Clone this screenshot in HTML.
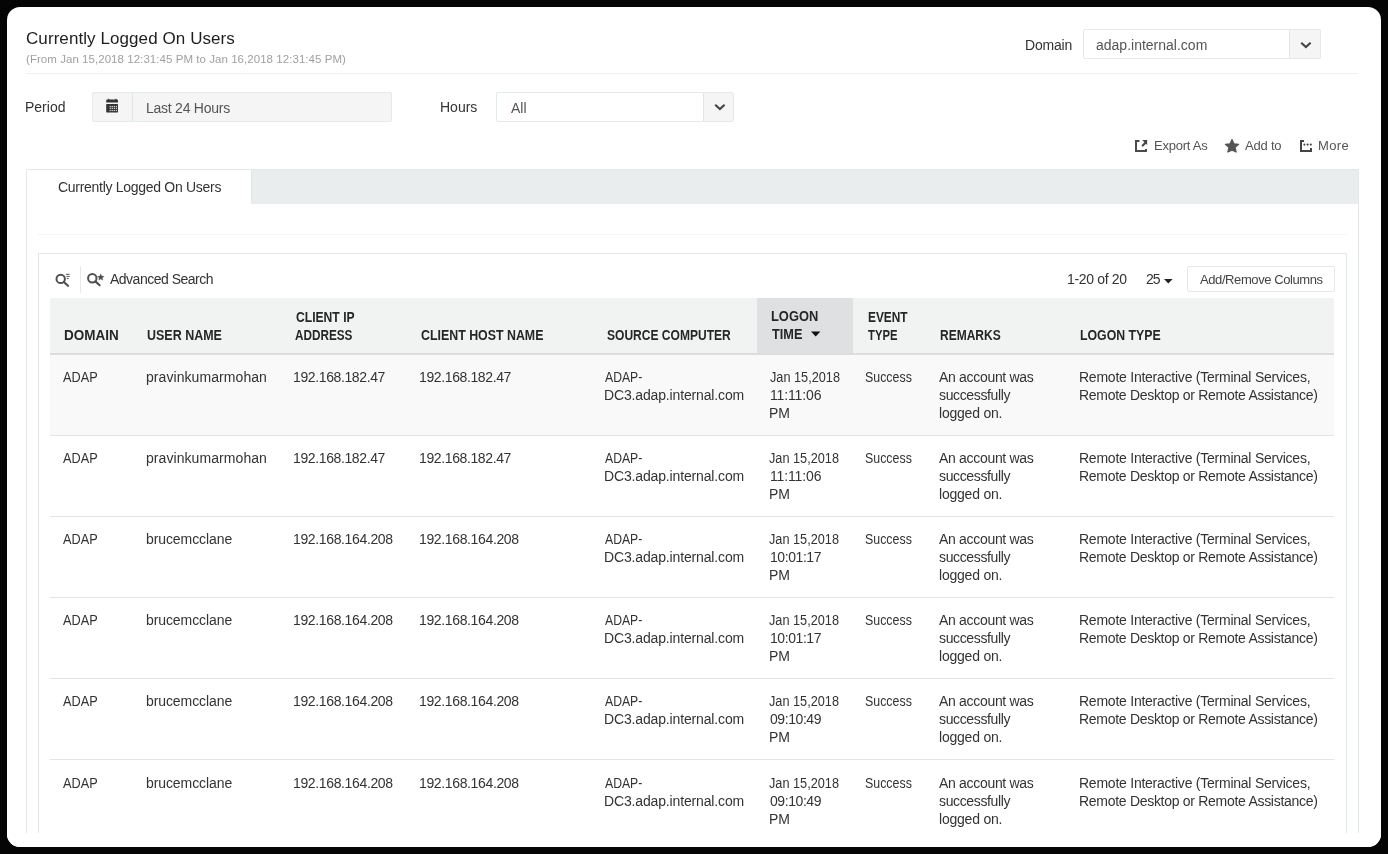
<!DOCTYPE html>
<html><head><meta charset="utf-8">
<style>
*{box-sizing:border-box;margin:0;padding:0}
html,body{width:1388px;height:854px;overflow:hidden;background:#050505}
body{font-family:"Liberation Sans",sans-serif;color:#333;position:relative}
.frame{position:absolute;left:7px;top:7px;width:1374px;height:840px;background:#fff;border-radius:13px}
.a{position:absolute;white-space:nowrap;transform-origin:0 0}
.hr{position:absolute;height:1px;background:#f0f0f0}
.box{position:absolute;border:1px solid #e4e9e9;border-radius:2px}
.tabbar{position:absolute;left:251px;top:169px;width:1108px;height:36px;background:#e9eded;border:1px solid #e2e7e7;border-bottom-left-radius:3px}
.tab{position:absolute;left:26px;top:169px;width:225px;height:36px;background:#fff;border:1px solid #e3e7e7;border-bottom:none;border-right:none}
.panel{position:absolute;left:26px;top:204px;width:1333px;height:629px;border-left:1px solid #e3e7e7;border-right:1px solid #e3e7e7;background:#fff}
.inner{position:absolute;left:38px;top:253px;width:1309px;height:580px;border:1px solid #e3e7e7;border-bottom:none;background:#fff}
.thead{position:absolute;left:50px;top:298px;width:1284px;height:57px;background:#f1f2f2;border-bottom:2px solid #dcdede}
.sorted{position:absolute;left:757px;top:298px;width:96px;height:55px;background:#dee0e1}
.row{position:absolute;left:50px;width:1284px;height:81px;border-bottom:1px solid #e4e4e4}
</style></head><body>
<div class="frame"></div>
<div class="hr" style="left:26px;top:73px;width:1332px"></div>

<div class="box" style="left:1083px;top:29px;width:238px;height:30px;background:#fff"></div>
<div class="a" style="left:1289px;top:30px;width:31px;height:28px;background:#f5f5f5;border-left:1px solid #e1e6e6"></div>
<svg class="a" style="left:1299px;top:40px" width="14" height="9" viewBox="0 0 14 9"><path d="M2.2 2.8 L6.9 7.1 L11.6 2.8" fill="none" stroke="#444" stroke-width="2.1"/></svg>

<div class="box" style="left:92px;top:92px;width:300px;height:30px;background:#f5f5f5"></div>
<div class="a" style="left:132px;top:93px;width:1px;height:28px;background:#e1e6e6"></div>
<svg class="a" style="left:106px;top:98px" width="13" height="15" viewBox="0 0 13 15">
 <path d="M0.2 4.5 L0.2 2.6 Q0.2 1.4 1.4 1.4 L2 1.4 L2.6 0.6 L3.6 1.4 L9 1.4 L10 0.6 L10.6 1.4 L11 1.4 Q12 1.4 12 2.6 L12 4.5 Z" fill="#333"/>
 <rect x="0.2" y="6" width="11.8" height="8.4" rx="0.6" fill="#333"/>
 <g fill="#d0d0d0"><rect x="3.6" y="7.9" width="1.3" height="1.2"/><rect x="5.6" y="7.9" width="1.3" height="1.2"/><rect x="7.7" y="7.9" width="1.3" height="1.2"/><rect x="9.8" y="7.9" width="1.3" height="1.2"/><rect x="3.6" y="9.7" width="1.3" height="1.2"/><rect x="5.6" y="9.7" width="1.3" height="1.2"/><rect x="7.7" y="9.7" width="1.3" height="1.2"/><rect x="9.8" y="9.7" width="1.3" height="1.2"/><rect x="3.6" y="11.9" width="1.3" height="1.2"/><rect x="5.6" y="11.9" width="1.3" height="1.2"/><rect x="7.7" y="11.9" width="1.3" height="1.2"/><rect x="9.8" y="11.9" width="1.3" height="1.2"/></g>
</svg>

<div class="box" style="left:496px;top:92px;width:238px;height:30px;background:#fff"></div>
<div class="a" style="left:703px;top:93px;width:30px;height:28px;background:#f5f5f5;border-left:1px solid #e1e6e6"></div>
<svg class="a" style="left:713px;top:102px" width="14" height="9" viewBox="0 0 14 9"><path d="M2.2 2.8 L6.9 7.1 L11.6 2.8" fill="none" stroke="#444" stroke-width="2.1"/></svg>

<svg class="a" style="left:1134px;top:139px" width="15" height="15" viewBox="0 0 15 15">
 <path d="M5.5 2 L2 2 L2 12 L12 12 L12 10" fill="none" stroke="#4a4a4a" stroke-width="2"/>
 <path d="M8.7 6.6 L11.8 3.5" fill="none" stroke="#444" stroke-width="2.1" stroke-linecap="round"/>
 <path d="M8.2 1.1 L13.1 1.1 L13.1 6 Z" fill="#444"/>
</svg>
<svg class="a" style="left:1224px;top:138px" width="16" height="16" viewBox="0 0 16 16"><path d="M8 1.4 L10 5.8 L14.7 6.3 L11.1 9.4 L12.2 14.1 L8 12.2 L3.8 14.1 L4.9 9.4 L1.3 6.3 L6 5.8 Z" fill="#555" stroke="#555" stroke-width="1.1" stroke-linejoin="round"/></svg>
<svg class="a" style="left:1299px;top:139px" width="15" height="15" viewBox="0 0 15 15">
 <path d="M5 2 L2 2 L2 12 L12 12 L12 9" fill="none" stroke="#444" stroke-width="2"/>
 <circle cx="5.4" cy="5.6" r="1.05" fill="#444"/><circle cx="8.6" cy="5.6" r="1.05" fill="#444"/><circle cx="11.8" cy="5.6" r="1.05" fill="#444"/>
</svg>

<div class="tabbar"></div>
<div class="panel"></div>
<div class="tab"></div>
<div class="hr" style="left:38px;top:234px;width:1309px;background:#f4f6f6"></div>
<div class="inner"></div>

<svg class="a" style="left:53px;top:272px" width="20" height="17" viewBox="0 0 20 17">
 <circle cx="7.7" cy="6.9" r="4.2" fill="none" stroke="#505050" stroke-width="2"/>
 <path d="M10.8 10 L15 13.8" stroke="#505050" stroke-width="2.2" stroke-linecap="round"/>
 <path d="M12.8 2.3 L16.6 2.3 M13.4 4.4 L16.6 4.4 M13.8 6.5 L15.6 6.5" stroke="#555" stroke-width="1"/>
</svg>
<div class="a" style="left:80px;top:266px;width:1px;height:27px;background:#e6eaea"></div>
<svg class="a" style="left:85px;top:271px" width="20" height="17" viewBox="0 0 20 17">
 <circle cx="7.3" cy="7.3" r="4.2" fill="none" stroke="#505050" stroke-width="2"/>
 <path d="M10.4 10.4 L14.6 14.2" stroke="#505050" stroke-width="2.2" stroke-linecap="round"/>
 <path d="M15.8 2.8 L16.8 5.1 L19.2 5.3 L17.4 6.9 L18 9.3 L15.8 8 L13.6 9.3 L14.2 6.9 L12.4 5.3 L14.8 5.1 Z" fill="#505050" stroke="#505050" stroke-width="0.2" stroke-linejoin="round"/>
</svg>

<svg class="a" style="left:1164px;top:279px" width="9" height="5" viewBox="0 0 9 5"><path d="M0 0 L8.6 0 L4.3 4.5 Z" fill="#222"/></svg>
<div class="box" style="left:1187px;top:266px;width:148px;height:26px;background:#fff;border-color:#e3e8e8"></div>

<div class="thead"></div>
<div class="sorted"></div>
<svg class="a" style="left:811px;top:331px" width="10" height="6" viewBox="0 0 10 6"><path d="M0 0.5 L9.4 0.5 L4.7 5.6 Z" fill="#111"/></svg>

<div class="row" style="top:355px;background:#f9f9f9"></div>
<div class="row" style="top:436.12px"></div>
<div class="row" style="top:517.24px"></div>
<div class="row" style="top:598.36px"></div>
<div class="row" style="top:679.48px"></div>
<div class="row" style="top:760.60px"></div>

<div style="position:absolute;left:0;top:0;width:1388px;height:854px;will-change:transform">
<div class="a" style="left:26.00px;top:28px;font-size:17px;line-height:22px;color:#1e1e1e;letter-spacing:0.08px;">Currently Logged On Users</div>
<div class="a" style="left:26.00px;top:51px;font-size:11.5px;line-height:16px;color:#a0a0a0;letter-spacing:0.05px;">(From Jan 15,2018 12:31:45 PM to Jan 16,2018 12:31:45 PM)</div>
<div class="a" style="left:1025.00px;top:36px;font-size:14px;line-height:18px;color:#333;letter-spacing:-0.20px;">Domain</div>
<div class="a" style="left:1096.00px;top:36px;font-size:14px;line-height:18px;color:#555;">adap.internal.com</div>
<div class="a" style="left:25.00px;top:98px;font-size:14px;line-height:18px;color:#333;">Period</div>
<div class="a" style="left:146.00px;top:99px;font-size:14px;line-height:18px;color:#555;letter-spacing:-0.25px;">Last 24 Hours</div>
<div class="a" style="left:440.00px;top:98px;font-size:14px;line-height:18px;color:#333;">Hours</div>
<div class="a" style="left:511.00px;top:99px;font-size:14px;line-height:18px;color:#555;">All</div>
<div class="a" style="left:1154.00px;top:137px;font-size:13px;line-height:18px;color:#555;letter-spacing:-0.25px;">Export As</div>
<div class="a" style="left:1245.00px;top:137px;font-size:13px;line-height:18px;color:#555;letter-spacing:-0.20px;">Add to</div>
<div class="a" style="left:1318.00px;top:137px;font-size:13px;line-height:18px;color:#555;letter-spacing:0.33px;">More</div>
<div class="a" style="left:58.00px;top:178px;font-size:14px;line-height:18px;color:#333;letter-spacing:-0.29px;">Currently Logged On Users</div>
<div class="a" style="left:110.00px;top:270px;font-size:14px;line-height:18px;color:#333;letter-spacing:-0.50px;">Advanced Search</div>
<div class="a" style="left:1067.00px;top:270px;font-size:14px;line-height:18px;color:#333;letter-spacing:-0.33px;">1-20 of 20</div>
<div class="a" style="left:1146.00px;top:270px;font-size:14px;line-height:18px;color:#333;letter-spacing:-1.00px;">25</div>
<div class="a" style="left:1200.00px;top:272px;font-size:13px;line-height:16px;color:#444;letter-spacing:-0.41px;">Add/Remove Columns</div>
<div class="a" style="left:64.00px;top:326px;font-size:14px;line-height:18px;color:#262626;font-weight:700;transform:scaleX(0.964);">DOMAIN</div>
<div class="a" style="left:147.00px;top:326px;font-size:14px;line-height:18px;color:#262626;font-weight:700;transform:scaleX(0.892);">USER NAME</div>
<div class="a" style="left:296.00px;top:308px;font-size:14px;line-height:18px;color:#262626;font-weight:700;transform:scaleX(0.866);">CLIENT IP</div>
<div class="a" style="left:295.00px;top:326px;font-size:14px;line-height:18px;color:#262626;font-weight:700;transform:scaleX(0.839);">ADDRESS</div>
<div class="a" style="left:421.00px;top:326px;font-size:14px;line-height:18px;color:#262626;font-weight:700;transform:scaleX(0.884);">CLIENT HOST NAME</div>
<div class="a" style="left:607.00px;top:326px;font-size:14px;line-height:18px;color:#262626;font-weight:700;transform:scaleX(0.860);">SOURCE COMPUTER</div>
<div class="a" style="left:771.00px;top:307px;font-size:14px;line-height:18px;color:#262626;font-weight:700;transform:scaleX(0.920);">LOGON</div>
<div class="a" style="left:772.00px;top:325px;font-size:14px;line-height:18px;color:#262626;font-weight:700;transform:scaleX(0.909);">TIME</div>
<div class="a" style="left:868.00px;top:308px;font-size:14px;line-height:18px;color:#262626;font-weight:700;transform:scaleX(0.849);">EVENT</div>
<div class="a" style="left:868.00px;top:326px;font-size:14px;line-height:18px;color:#262626;font-weight:700;transform:scaleX(0.806);">TYPE</div>
<div class="a" style="left:940.00px;top:326px;font-size:14px;line-height:18px;color:#262626;font-weight:700;transform:scaleX(0.857);">REMARKS</div>
<div class="a" style="left:1080.00px;top:326px;font-size:14px;line-height:18px;color:#262626;font-weight:700;transform:scaleX(0.879);">LOGON TYPE</div>
<div class="a" style="left:63.00px;top:368.0px;font-size:14px;line-height:18px;color:#333;transform:scaleX(0.908);">ADAP</div>
<div class="a" style="left:146.00px;top:368.0px;font-size:14px;line-height:18px;color:#333;letter-spacing:0.07px;">pravinkumarmohan</div>
<div class="a" style="left:293.00px;top:368.0px;font-size:14px;line-height:18px;color:#333;letter-spacing:-0.38px;">192.168.182.47</div>
<div class="a" style="left:419.00px;top:368.0px;font-size:14px;line-height:18px;color:#333;letter-spacing:-0.38px;">192.168.182.47</div>
<div class="a" style="left:605.00px;top:368.0px;font-size:14px;line-height:18px;color:#333;transform:scaleX(0.872);">ADAP-</div>
<div class="a" style="left:604.00px;top:386.0px;font-size:14px;line-height:18px;color:#333;letter-spacing:-0.15px;">DC3.adap.internal.com</div>
<div class="a" style="left:770.00px;top:368.0px;font-size:14px;line-height:18px;color:#333;transform:scaleX(0.908);">Jan 15,2018</div>
<div class="a" style="left:770.00px;top:386.0px;font-size:14px;line-height:18px;color:#333;letter-spacing:-0.14px;">11:11:06</div>
<div class="a" style="left:769.00px;top:404.0px;font-size:14px;line-height:18px;color:#333;">PM</div>
<div class="a" style="left:865.00px;top:368.0px;font-size:14px;line-height:18px;color:#333;transform:scaleX(0.885);">Success</div>
<div class="a" style="left:939.00px;top:368.0px;font-size:14px;line-height:18px;color:#333;letter-spacing:-0.31px;">An account was</div>
<div class="a" style="left:939.00px;top:386.0px;font-size:14px;line-height:18px;color:#333;letter-spacing:-0.36px;">successfully</div>
<div class="a" style="left:939.00px;top:404.0px;font-size:14px;line-height:18px;color:#333;letter-spacing:-0.22px;">logged on.</div>
<div class="a" style="left:1079.00px;top:368.0px;font-size:14px;line-height:18px;color:#333;letter-spacing:-0.24px;">Remote Interactive (Terminal Services,</div>
<div class="a" style="left:1079.00px;top:386.0px;font-size:14px;line-height:18px;color:#333;letter-spacing:-0.29px;">Remote Desktop or Remote Assistance)</div>
<div class="a" style="left:63.00px;top:449.12px;font-size:14px;line-height:18px;color:#333;transform:scaleX(0.908);">ADAP</div>
<div class="a" style="left:146.00px;top:449.12px;font-size:14px;line-height:18px;color:#333;letter-spacing:0.07px;">pravinkumarmohan</div>
<div class="a" style="left:293.00px;top:449.12px;font-size:14px;line-height:18px;color:#333;letter-spacing:-0.38px;">192.168.182.47</div>
<div class="a" style="left:419.00px;top:449.12px;font-size:14px;line-height:18px;color:#333;letter-spacing:-0.38px;">192.168.182.47</div>
<div class="a" style="left:605.00px;top:449.12px;font-size:14px;line-height:18px;color:#333;transform:scaleX(0.872);">ADAP-</div>
<div class="a" style="left:604.00px;top:467.12px;font-size:14px;line-height:18px;color:#333;letter-spacing:-0.15px;">DC3.adap.internal.com</div>
<div class="a" style="left:769.00px;top:449.12px;font-size:14px;line-height:18px;color:#333;transform:scaleX(0.908);">Jan 15,2018</div>
<div class="a" style="left:770.00px;top:467.12px;font-size:14px;line-height:18px;color:#333;letter-spacing:-0.14px;">11:11:06</div>
<div class="a" style="left:769.00px;top:485.12px;font-size:14px;line-height:18px;color:#333;">PM</div>
<div class="a" style="left:865.00px;top:449.12px;font-size:14px;line-height:18px;color:#333;transform:scaleX(0.885);">Success</div>
<div class="a" style="left:939.00px;top:449.12px;font-size:14px;line-height:18px;color:#333;letter-spacing:-0.31px;">An account was</div>
<div class="a" style="left:939.00px;top:467.12px;font-size:14px;line-height:18px;color:#333;letter-spacing:-0.36px;">successfully</div>
<div class="a" style="left:939.00px;top:485.12px;font-size:14px;line-height:18px;color:#333;letter-spacing:-0.22px;">logged on.</div>
<div class="a" style="left:1079.00px;top:449.12px;font-size:14px;line-height:18px;color:#333;letter-spacing:-0.24px;">Remote Interactive (Terminal Services,</div>
<div class="a" style="left:1079.00px;top:467.12px;font-size:14px;line-height:18px;color:#333;letter-spacing:-0.29px;">Remote Desktop or Remote Assistance)</div>
<div class="a" style="left:63.00px;top:530.24px;font-size:14px;line-height:18px;color:#333;transform:scaleX(0.908);">ADAP</div>
<div class="a" style="left:146.00px;top:530.24px;font-size:14px;line-height:18px;color:#333;letter-spacing:-0.09px;">brucemcclane</div>
<div class="a" style="left:293.00px;top:530.24px;font-size:14px;line-height:18px;color:#333;letter-spacing:-0.36px;">192.168.164.208</div>
<div class="a" style="left:419.00px;top:530.24px;font-size:14px;line-height:18px;color:#333;letter-spacing:-0.36px;">192.168.164.208</div>
<div class="a" style="left:605.00px;top:530.24px;font-size:14px;line-height:18px;color:#333;transform:scaleX(0.872);">ADAP-</div>
<div class="a" style="left:604.00px;top:548.24px;font-size:14px;line-height:18px;color:#333;letter-spacing:-0.15px;">DC3.adap.internal.com</div>
<div class="a" style="left:769.00px;top:530.24px;font-size:14px;line-height:18px;color:#333;transform:scaleX(0.908);">Jan 15,2018</div>
<div class="a" style="left:770.00px;top:548.24px;font-size:14px;line-height:18px;color:#333;letter-spacing:-0.43px;">10:01:17</div>
<div class="a" style="left:769.00px;top:566.24px;font-size:14px;line-height:18px;color:#333;">PM</div>
<div class="a" style="left:865.00px;top:530.24px;font-size:14px;line-height:18px;color:#333;transform:scaleX(0.885);">Success</div>
<div class="a" style="left:939.00px;top:530.24px;font-size:14px;line-height:18px;color:#333;letter-spacing:-0.31px;">An account was</div>
<div class="a" style="left:939.00px;top:548.24px;font-size:14px;line-height:18px;color:#333;letter-spacing:-0.36px;">successfully</div>
<div class="a" style="left:939.00px;top:566.24px;font-size:14px;line-height:18px;color:#333;letter-spacing:-0.22px;">logged on.</div>
<div class="a" style="left:1079.00px;top:530.24px;font-size:14px;line-height:18px;color:#333;letter-spacing:-0.24px;">Remote Interactive (Terminal Services,</div>
<div class="a" style="left:1079.00px;top:548.24px;font-size:14px;line-height:18px;color:#333;letter-spacing:-0.29px;">Remote Desktop or Remote Assistance)</div>
<div class="a" style="left:63.00px;top:611.36px;font-size:14px;line-height:18px;color:#333;transform:scaleX(0.908);">ADAP</div>
<div class="a" style="left:146.00px;top:611.36px;font-size:14px;line-height:18px;color:#333;letter-spacing:-0.09px;">brucemcclane</div>
<div class="a" style="left:293.00px;top:611.36px;font-size:14px;line-height:18px;color:#333;letter-spacing:-0.36px;">192.168.164.208</div>
<div class="a" style="left:419.00px;top:611.36px;font-size:14px;line-height:18px;color:#333;letter-spacing:-0.36px;">192.168.164.208</div>
<div class="a" style="left:605.00px;top:611.36px;font-size:14px;line-height:18px;color:#333;transform:scaleX(0.872);">ADAP-</div>
<div class="a" style="left:604.00px;top:629.36px;font-size:14px;line-height:18px;color:#333;letter-spacing:-0.15px;">DC3.adap.internal.com</div>
<div class="a" style="left:769.00px;top:611.36px;font-size:14px;line-height:18px;color:#333;transform:scaleX(0.908);">Jan 15,2018</div>
<div class="a" style="left:770.00px;top:629.36px;font-size:14px;line-height:18px;color:#333;letter-spacing:-0.43px;">10:01:17</div>
<div class="a" style="left:769.00px;top:647.36px;font-size:14px;line-height:18px;color:#333;">PM</div>
<div class="a" style="left:865.00px;top:611.36px;font-size:14px;line-height:18px;color:#333;transform:scaleX(0.885);">Success</div>
<div class="a" style="left:939.00px;top:611.36px;font-size:14px;line-height:18px;color:#333;letter-spacing:-0.31px;">An account was</div>
<div class="a" style="left:939.00px;top:629.36px;font-size:14px;line-height:18px;color:#333;letter-spacing:-0.36px;">successfully</div>
<div class="a" style="left:939.00px;top:647.36px;font-size:14px;line-height:18px;color:#333;letter-spacing:-0.22px;">logged on.</div>
<div class="a" style="left:1079.00px;top:611.36px;font-size:14px;line-height:18px;color:#333;letter-spacing:-0.24px;">Remote Interactive (Terminal Services,</div>
<div class="a" style="left:1079.00px;top:629.36px;font-size:14px;line-height:18px;color:#333;letter-spacing:-0.29px;">Remote Desktop or Remote Assistance)</div>
<div class="a" style="left:63.00px;top:692.48px;font-size:14px;line-height:18px;color:#333;transform:scaleX(0.908);">ADAP</div>
<div class="a" style="left:146.00px;top:692.48px;font-size:14px;line-height:18px;color:#333;letter-spacing:-0.09px;">brucemcclane</div>
<div class="a" style="left:293.00px;top:692.48px;font-size:14px;line-height:18px;color:#333;letter-spacing:-0.36px;">192.168.164.208</div>
<div class="a" style="left:419.00px;top:692.48px;font-size:14px;line-height:18px;color:#333;letter-spacing:-0.36px;">192.168.164.208</div>
<div class="a" style="left:605.00px;top:692.48px;font-size:14px;line-height:18px;color:#333;transform:scaleX(0.872);">ADAP-</div>
<div class="a" style="left:604.00px;top:710.48px;font-size:14px;line-height:18px;color:#333;letter-spacing:-0.15px;">DC3.adap.internal.com</div>
<div class="a" style="left:769.00px;top:692.48px;font-size:14px;line-height:18px;color:#333;transform:scaleX(0.908);">Jan 15,2018</div>
<div class="a" style="left:770.00px;top:710.48px;font-size:14px;line-height:18px;color:#333;letter-spacing:-0.43px;">09:10:49</div>
<div class="a" style="left:769.00px;top:728.48px;font-size:14px;line-height:18px;color:#333;">PM</div>
<div class="a" style="left:865.00px;top:692.48px;font-size:14px;line-height:18px;color:#333;transform:scaleX(0.885);">Success</div>
<div class="a" style="left:939.00px;top:692.48px;font-size:14px;line-height:18px;color:#333;letter-spacing:-0.31px;">An account was</div>
<div class="a" style="left:939.00px;top:710.48px;font-size:14px;line-height:18px;color:#333;letter-spacing:-0.36px;">successfully</div>
<div class="a" style="left:939.00px;top:728.48px;font-size:14px;line-height:18px;color:#333;letter-spacing:-0.22px;">logged on.</div>
<div class="a" style="left:1079.00px;top:692.48px;font-size:14px;line-height:18px;color:#333;letter-spacing:-0.24px;">Remote Interactive (Terminal Services,</div>
<div class="a" style="left:1079.00px;top:710.48px;font-size:14px;line-height:18px;color:#333;letter-spacing:-0.29px;">Remote Desktop or Remote Assistance)</div>
<div class="a" style="left:63.00px;top:773.6px;font-size:14px;line-height:18px;color:#333;transform:scaleX(0.908);">ADAP</div>
<div class="a" style="left:146.00px;top:773.6px;font-size:14px;line-height:18px;color:#333;letter-spacing:-0.09px;">brucemcclane</div>
<div class="a" style="left:293.00px;top:773.6px;font-size:14px;line-height:18px;color:#333;letter-spacing:-0.36px;">192.168.164.208</div>
<div class="a" style="left:419.00px;top:773.6px;font-size:14px;line-height:18px;color:#333;letter-spacing:-0.36px;">192.168.164.208</div>
<div class="a" style="left:605.00px;top:773.6px;font-size:14px;line-height:18px;color:#333;transform:scaleX(0.872);">ADAP-</div>
<div class="a" style="left:604.00px;top:791.6px;font-size:14px;line-height:18px;color:#333;letter-spacing:-0.15px;">DC3.adap.internal.com</div>
<div class="a" style="left:769.00px;top:773.6px;font-size:14px;line-height:18px;color:#333;transform:scaleX(0.908);">Jan 15,2018</div>
<div class="a" style="left:770.00px;top:791.6px;font-size:14px;line-height:18px;color:#333;letter-spacing:-0.43px;">09:10:49</div>
<div class="a" style="left:769.00px;top:809.6px;font-size:14px;line-height:18px;color:#333;">PM</div>
<div class="a" style="left:865.00px;top:773.6px;font-size:14px;line-height:18px;color:#333;transform:scaleX(0.885);">Success</div>
<div class="a" style="left:939.00px;top:773.6px;font-size:14px;line-height:18px;color:#333;letter-spacing:-0.31px;">An account was</div>
<div class="a" style="left:939.00px;top:791.6px;font-size:14px;line-height:18px;color:#333;letter-spacing:-0.36px;">successfully</div>
<div class="a" style="left:939.00px;top:809.6px;font-size:14px;line-height:18px;color:#333;letter-spacing:-0.22px;">logged on.</div>
<div class="a" style="left:1079.00px;top:773.6px;font-size:14px;line-height:18px;color:#333;letter-spacing:-0.24px;">Remote Interactive (Terminal Services,</div>
<div class="a" style="left:1079.00px;top:791.6px;font-size:14px;line-height:18px;color:#333;letter-spacing:-0.29px;">Remote Desktop or Remote Assistance)</div>
</div>

<div class="a" style="left:7px;top:833px;width:1374px;height:14px;background:#fff;border-radius:0 0 13px 13px"></div>
</body></html>
